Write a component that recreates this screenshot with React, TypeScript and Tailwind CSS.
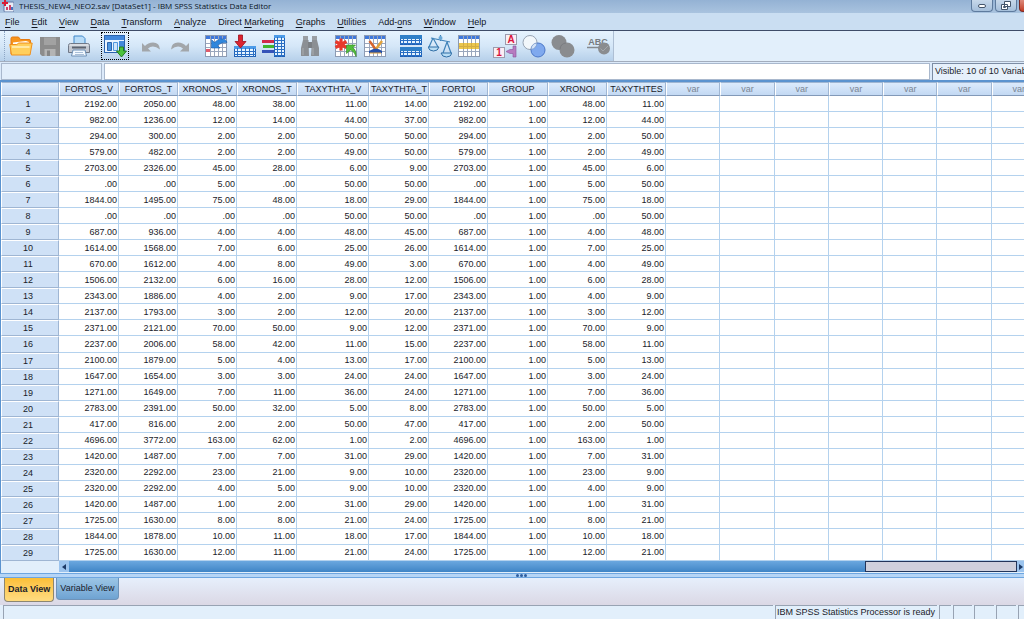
import type { ReactNode } from "react";

type Column = { name: string; width: string };

const columns: Column[] = [
  { name: "FORTOS_V", width: "w-[60px]" },
  { name: "FORTOS_T", width: "w-[59px]" },
  { name: "XRONOS_V", width: "w-[59px]" },
  { name: "XRONOS_T", width: "w-[60px]" },
  { name: "TAXYTHTA_V", width: "w-[72px]" },
  { name: "TAXYTHTA_T", width: "w-[60px]" },
  { name: "FORTOI", width: "w-[59px]" },
  { name: "GROUP", width: "w-[60px]" },
  { name: "XRONOI", width: "w-[59px]" },
  { name: "TAXYTHTES", width: "w-[59px]" },
];

const emptyColumns = [0, 1, 2, 3, 4, 5, 6];

/* FORTOS_V, FORTOS_T, XRONOS_V, XRONOS_T, TAXYTHTA_V, TAXYTHTA_T */
const measurements: number[][] = [
  [2192, 2050, 48, 38, 11, 14],
  [982, 1236, 12, 14, 44, 37],
  [294, 300, 2, 2, 50, 50],
  [579, 482, 2, 2, 49, 50],
  [2703, 2326, 45, 28, 6, 9],
  [0, 0, 5, 0, 50, 50],
  [1844, 1495, 75, 48, 18, 29],
  [0, 0, 0, 0, 50, 50],
  [687, 936, 4, 4, 48, 45],
  [1614, 1568, 7, 6, 25, 26],
  [670, 1612, 4, 8, 49, 3],
  [1506, 2132, 6, 16, 28, 12],
  [2343, 1886, 4, 2, 9, 17],
  [2137, 1793, 3, 2, 12, 20],
  [2371, 2121, 70, 50, 9, 12],
  [2237, 2006, 58, 42, 11, 15],
  [2100, 1879, 5, 4, 13, 17],
  [1647, 1654, 3, 3, 24, 24],
  [1271, 1649, 7, 11, 36, 24],
  [2783, 2391, 50, 32, 5, 8],
  [417, 816, 2, 2, 50, 47],
  [4696, 3772, 163, 62, 1, 2],
  [1420, 1487, 7, 7, 31, 29],
  [2320, 2292, 23, 21, 9, 10],
  [2320, 2292, 4, 5, 9, 10],
  [1420, 1487, 1, 2, 31, 29],
  [1725, 1630, 8, 8, 21, 24],
  [1844, 1878, 10, 11, 18, 17],
  [1725, 1630, 12, 11, 21, 24],
];

const rows = measurements.map((m) => [...m, m[0], 1, m[2], m[4]]);

const format = (value: number) => (value === 0 ? ".00" : value.toFixed(2));

const menus: [string, string, string][] = [
  ["", "F", "ile"],
  ["", "E", "dit"],
  ["", "V", "iew"],
  ["", "D", "ata"],
  ["", "T", "ransform"],
  ["", "A", "nalyze"],
  ["Direct ", "M", "arketing"],
  ["", "G", "raphs"],
  ["", "U", "tilities"],
  ["Add-", "o", "ns"],
  ["", "W", "indow"],
  ["", "H", "elp"],
];

function Icon({ children }: { children: ReactNode }) {
  return (
    <svg viewBox="0 0 24 24" className="size-6" fill="none" aria-hidden="true">
      {children}
    </svg>
  );
}

function Sheet() {
  return (
    <>
      <rect x="1.5" y="1.5" width="21" height="21" fill="#fff" stroke="#8d9bb3" />
      <path d="M2 2h20v3H2z" fill="#3f78dc" />
      <path d="M2 9.5h20M2 13.5h20M2 17.5h20M6.5 2v20M10.5 2v20M14.5 2v20M18.5 2v20" stroke="#9aa7bd" />
    </>
  );
}

function BlueGrid({ x, y, w, h }: { x: number; y: number; w: number; h: number }) {
  const vertical = [];
  const horizontal = [];
  for (let i = 4; i < w; i += 4) vertical.push(`M${x + i - 0.5} ${y + 2}v${h - 2}`);
  for (let i = 5; i < h; i += 3) horizontal.push(`M${x} ${y + i + 0.5}h${w}`);
  return (
    <>
      <rect x={x} y={y} width={w} height={h} fill="#1f5fb4" />
      <rect x={x + 1} y={y + 3} width={w - 2} height={h - 4} fill="#e6f4ff" />
      <rect x={x} y={y} width={w} height="3" fill="#4c9be8" />
      <path d={[...vertical, ...horizontal].join("")} stroke="#2a6fc4" />
    </>
  );
}

const icons: Record<string, ReactNode> = {
  "Open data document": (
    <Icon>
      <path d="M2 20V4.500q0-1.500 1.500-1.500h6l2 2.500H20q1.500 0 1.500 1.500v3z" fill="#f7941c" stroke="#e67a10" />
      <path d="M4 8.500 17 7l3 1v3H4z" fill="#fff" />
      <path d="M.8 10.500h7l2-1.500h13.400L21 21H2.500z" fill="#ffcf5c" stroke="#f0901c" />
      <path d="M3 13h17.500" stroke="#ffe9a5" strokeWidth="2" />
    </Icon>
  ),
  "Save this document": (
    <Icon>
      <path d="M2 3h20v19H4l-2-2z" fill="#8c8c8c" />
      <path d="M6 3.500h12V11H6z" fill="#a2a2a2" />
      <path d="M6.500 15h11v7h-11z" fill="#b4b4b4" />
      <path d="M9 16.500h3V22H9z" fill="#858585" />
    </Icon>
  ),
  Print: (
    <Icon>
      <path d="M7 10V2h8.500L18 4.500V10z" fill="#b8dcf8" stroke="#3f86c8" />
      <path d="M3.500 9.500h17q2 0 2 2v7H1.500v-7q0-2 2-2z" fill="#c3c8d1" stroke="#707988" />
      <path d="M2.500 11h19" stroke="#eef1f5" />
      <path d="M5 13.500h14" stroke="#5c6471" strokeWidth="2" />
      <path d="M6 16h12l1.500 6h-15z" fill="#f3f9ff" stroke="#6d8fb5" />
      <path d="M8 18.500h8M8 20.500h9" stroke="#a9bfd8" />
    </Icon>
  ),
  "Recall recently used dialogs": (
    <Icon>
      <rect x="1.500" y="1.500" width="20" height="17" fill="#e9f4ff" stroke="#2b63ad" />
      <path d="M2 2h19v4H2z" fill="#4389dc" />
      <path d="M4.500 8.500h4v8h-4z" fill="#4e97df" stroke="#2b63ad" />
      <path d="M10.500 8.500h4v8h-4z" fill="#cfe5fa" stroke="#4e97df" />
      <path d="M16 7h5v11h-5z" fill="#4389dc" />
      <path d="M16.500 13h4v4h3l-5 6-5-6h3z" fill="#4cc33b" stroke="#227c20" />
    </Icon>
  ),
  Undo: (
    <Icon>
      <path d="M3 9v8.500h9l-3-3q5-4.500 12 1Q20.500 8.500 14 8.500 9 8.500 6 12z" fill="#a2a6aa" />
    </Icon>
  ),
  Redo: (
    <Icon>
      <path d="M21 9v8.500h-9l3-3q-5-4.500-12 1Q3.500 8.500 10 8.500q5 0 8 3.500z" fill="#a2a6aa" />
    </Icon>
  ),
  "Go to case": (
    <Icon>
      <Sheet />
      <path d="M2 15h4v3H2z" fill="#e05a6a" />
      <path d="M7.500 5.500V14H16l-2.500-2.500Q17 8 23 8.500q-1-4-6-3.500-4 .5-6.500 3.500z" fill="#2f86dc" stroke="#1b5cab" strokeWidth=".6" />
    </Icon>
  ),
  "Go to variable": (
    <Icon>
      <BlueGrid x={1} y={12} w={22} h={11} />
      <path d="M5.500 1h4v6.500H13L7.500 14 2 7.500h3.500z" fill="#dc2430" stroke="#9c0f1c" strokeWidth=".8" />
    </Icon>
  ),
  Variables: (
    <Icon>
      <BlueGrid x={12} y={1} w={11} h={22} />
      <path d="M0 7.500h12" stroke="#d02a4a" strokeWidth="3" />
      <path d="M1 12.500h11" stroke="#3fb52e" strokeWidth="3" />
      <path d="M0 17.500h12" stroke="#3553b8" strokeWidth="3" />
    </Icon>
  ),
  Find: (
    <Icon>
      <path d="M5 2h5v5H5zM14 2h5v5h-5z" fill="#9b9fa4" />
      <path d="M5 6h5.500L11 22H3v-8zM14 6h5l2 8v8h-8z" fill="#8b8f94" />
      <path d="M10 8h4v6h-4z" fill="#7b7f84" />
      <path d="M5 14v7M15 14v7" stroke="#a9adb1" />
    </Icon>
  ),
  "Insert cases": (
    <Icon>
      <Sheet />
      <path d="M7 4.500v12M1.500 7.500l11 6M12.500 7.500l-11 6" stroke="#e8392c" strokeWidth="3.200" />
      <path d="M12.500 11h9L19 13.500q4 4 3 9-1.500-5-5.500-6.500l-4 3.500z" fill="#53bd3d" stroke="#2c8a22" strokeWidth=".6" />
    </Icon>
  ),
  "Insert variable": (
    <Icon>
      <Sheet />
      <path d="m6.500 7 6 8" stroke="#d8642c" strokeWidth="2.500" />
      <path d="m19 7-6 8" stroke="#e2a23a" strokeWidth="2.500" />
      <path d="M6 17q4-2.500 7-2.500T19 17v2H6z" fill="#244fa8" />
      <path d="M7 19h11" stroke="#e2a23a" />
    </Icon>
  ),
  "Split file": (
    <Icon>
      <BlueGrid x={1} y={1} w={22} h={10} />
      <BlueGrid x={1} y={13} w={22} h={10} />
      <path d="M1 1h22v4H1zM1 13h22v4H1z" fill="#2f7fc8" />
    </Icon>
  ),
  "Weight cases": (
    <Icon>
      <path d="m3 4 19 4M12.500 1v6M5 4 1 13M5 4l5 9M19 8l-4 11M19 8l4 11" stroke="#3f82b8" strokeWidth="1.200" />
      <path d="M0 13h11q-1 4-5.500 4T0 13zM13 19h11q-1 4-5.500 4T13 19z" fill="#b9ddf4" stroke="#2f6ea6" />
      <circle cx="12.500" cy="4" r="2" fill="#6ba9d8" />
    </Icon>
  ),
  "Select cases": (
    <Icon>
      <Sheet />
      <path d="M2 9h20v6H2z" fill="#ebc64e" />
      <path d="M6.500 9v6M10.500 9v6M14.500 9v6M18.500 9v6M2 12.500h20" stroke="#d3ad45" />
    </Icon>
  ),
  "Value labels": (
    <svg viewBox="0 0 24 24" className="size-6" fill="none" aria-hidden="true">
      <rect x="12.500" y=".5" width="11" height="10" fill="#fbeef4" stroke="#9c9cae" />
      <rect x=".5" y="13.500" width="11" height="10" fill="#fbeef4" stroke="#9c9cae" />
      <path d="M23 12v11h-3v-3.500h-3l-4-2 4-2h3V12z" fill="#b77bc0" stroke="#8c539c" strokeWidth=".6" />
      <text x="18" y="9" textAnchor="middle" fill="#d8143c" className="font-['Liberation_Sans'] text-[10px] font-bold">A</text>
      <text x="6" y="22" textAnchor="middle" fill="#d8143c" className="font-['Liberation_Sans'] text-[10px] font-bold">1</text>
    </svg>
  ),
  "Use variable sets": (
    <Icon>
      <circle cx="8" cy="8.500" r="7" fill="#f2f7fb" stroke="#97a3b3" />
      <circle cx="16" cy="16" r="7" fill="#7fa9ee" stroke="#4c78c8" />
      <path d="M9 15.400Q9.500 9.500 15 9q-.5 5.500-6 6.400z" fill="#d3e3f8" stroke="#6f8fc0" strokeWidth=".6" />
    </Icon>
  ),
  "Show all variables": (
    <Icon>
      <circle cx="8" cy="8.500" r="7.500" fill="#8a8c8f" />
      <circle cx="16" cy="16" r="7.500" fill="#8a8c8f" />
      <path d="M9 15.400Q9.500 9.500 15 9" stroke="#7a7c80" />
    </Icon>
  ),
  "Spell check": (
    <svg viewBox="0 0 24 24" className="size-6" fill="none" aria-hidden="true">
      <text x="11" y="11" textAnchor="middle" fill="#777b80" className="font-['Liberation_Sans'] text-[9px] font-bold">ABC</text>
      <path d="M0 13.500h13" stroke="#85898e" strokeWidth="1.500" />
      <circle cx="17" cy="14.500" r="6" fill="#8a8c8f" />
      <path d="m13.500 14.500 2.500 2.500 5-5" stroke="#a4a7ab" />
    </svg>
  ),
};

const toolbarGroups: string[][] = [
  ["Open data document", "Save this document", "Print"],
  ["Recall recently used dialogs"],
  ["Undo", "Redo"],
  ["Go to case", "Go to variable", "Variables"],
  ["Find"],
  ["Insert cases", "Insert variable"],
  ["Split file", "Weight cases", "Select cases"],
  ["Value labels", "Use variable sets", "Show all variables"],
  ["Spell check"],
];

function TitleBar() {
  return (
    <header className="flex h-[13px] shrink-0 items-start overflow-hidden bg-linear-to-b from-[#94b2d4] to-[#a9c3df] pl-[2px]">
      <svg viewBox="0 0 12 12" className="size-3 shrink-0" aria-hidden="true">
        <rect x="2" y="2" width="10" height="10" rx="1" fill="#e8edf6" stroke="#5f78a8" />
        <path d="M3 0v6M0 3h6" stroke="#d81c34" strokeWidth="2" />
        <path d="M4 10V7h2v3zM7 10V5h2v5z" fill="#d04468" />
        <path d="M9 10V7h2v3z" fill="#4670c0" />
      </svg>
      <h1 className="ml-[5px] grow truncate font-['Open_Sans',sans-serif] text-[8px] leading-[12px] text-[#0c1626]">
        THESIS_NEW4_NEO2.sav [DataSet1] - IBM SPSS Statistics Data Editor
      </h1>
      <div className="-mr-[17px] flex shrink-0 gap-[2px]">
        <button aria-label="Minimize" className="flex h-3 w-[22px] items-center justify-center rounded-b border border-t-0 border-[#5e7b9e] bg-linear-to-b from-[#c7d8ea] to-[#a5bfdb]">
          <span className="h-1 w-2 rounded-xs border border-[#44556b] bg-white" />
        </button>
        <button aria-label="Restore" className="flex h-3 w-[22px] items-center justify-center rounded-b border border-t-0 border-[#5e7b9e] bg-linear-to-b from-[#c7d8ea] to-[#a5bfdb]">
          <svg viewBox="0 0 10 9" className="h-[9px] w-[10px]" fill="#fff" stroke="#44556b" aria-hidden="true">
            <path d="M3.500.5h6v5h-6zM.5 3.500h6v5h-6z" />
            <path d="M2.500 5.500h2v1h-2z" />
          </svg>
        </button>
        <button aria-label="Close" className="h-3 w-[22px] rounded-b border border-t-0 border-[#7a2b25] bg-linear-to-b from-[#dc8a7c] to-[#c03a24]" />
      </div>
    </header>
  );
}

function MenuBar() {
  return (
    <nav className="flex h-[18px] shrink-0 items-center gap-3 border-b border-[#3e4c68] bg-[#cadef2] pl-[5px] text-[#10131c]">
      {menus.map(([before, key, after]) => (
        <button key={before + key + after} className="whitespace-pre leading-[14px]">
          {before}
          <span className="underline underline-offset-2">{key}</span>
          {after}
        </button>
      ))}
    </nav>
  );
}

function Toolbar() {
  return (
    <div className="flex h-[31px] shrink-0 border-b border-[#a3adbd] bg-[#e2effb]">
      <div role="toolbar" className="flex items-center gap-2 border-r border-[#aebfd4] bg-linear-to-b from-[#e6f3fe] via-[#d5e7f8] to-[#b6d0ea] pl-1">
        <span className="-mr-2 h-full border-l border-dotted border-[#8ea6c4] pl-[2px]" />
        {toolbarGroups.map((group) => (
          <div key={group[0]} className="flex gap-px">
            {group.map((name) => (
              <button
                key={name}
                title={name}
                aria-label={name}
                className={`flex h-7 w-7 items-center justify-center ${
                  group[0] === "Recall recently used dialogs" ? "border border-dotted border-black" : ""
                }`}
              >
                {icons[name]}
              </button>
            ))}
          </div>
        ))}
      </div>
    </div>
  );
}

function CellEditor() {
  return (
    <div className="flex h-[18px] shrink-0 gap-[2px] bg-[#dceafa] pl-px pt-px">
      <div className="w-[101px] border border-[#a9b8cd] bg-[#e2eefb]" />
      <input aria-label="Cell value" className="min-w-0 grow border border-[#a9b8cd] bg-white px-1 outline-none" />
      <div className="w-[92px] shrink-0 overflow-hidden whitespace-nowrap border-l border-t border-[#7c8ca4] bg-[#e6f0fb] pl-[2px] leading-[15px]">
        Visible: 10 of 10 Variables
      </div>
    </div>
  );
}

const headCell =
  "overflow-hidden border border-[#9fb6d3] border-b-[#8299b8] border-l-white bg-linear-to-b from-[#dcebfc] to-[#c3d9f3] p-0 text-center font-normal whitespace-nowrap";

function DataGrid() {
  return (
    <main className="min-h-0 grow overflow-hidden border-l border-t-2 border-[#5b93cf] bg-white">
      <table className="h-full w-[1045px] table-fixed border-separate border-spacing-0 leading-[12px]">
        <colgroup>
          <col className="w-[58px]" />
          {columns.map((c) => (
            <col key={c.name} className={c.width} />
          ))}
          {emptyColumns.map((i) => (
            <col key={i} />
          ))}
        </colgroup>
        <thead>
          <tr>
            <td className={headCell} />
            {columns.map((c) => (
              <th key={c.name} scope="col" className={headCell}>
                {c.name}
              </th>
            ))}
            {emptyColumns.map((i) => (
              <th key={i} scope="col" className={`${headCell} text-[#7b8694]`}>
                var
              </th>
            ))}
          </tr>
        </thead>
        <tbody>
          {rows.map((row, r) => (
            <tr key={r}>
              <th scope="row" className="border border-[#9fb6d3] border-t-white border-l-white bg-[#cfe1f6] p-0 pr-1 text-center font-normal">
                {r + 1}
              </th>
              {row.map((value, c) => (
                <td key={c} className="border-r border-b border-[#b4d2ee] p-0 pr-px text-right">
                  {format(value)}
                </td>
              ))}
              {emptyColumns.map((i) => (
                <td key={i} className="border-r border-b border-[#b4d2ee] p-0" />
              ))}
            </tr>
          ))}
        </tbody>
      </table>
    </main>
  );
}

function HorizontalScroll() {
  return (
    <div className="flex h-3 shrink-0 border-l border-[#5b93cf] bg-[#e2effb] pb-px">
      <div className="flex grow pl-[58px]">
        <button aria-label="Scroll left" className="flex w-[10px] items-center justify-center bg-[#9cc4ee]">
          <svg viewBox="0 0 4 6" className="h-[6px] w-1" aria-hidden="true"><path d="M4 0v6L0 3z" fill="#1c3a66" /></svg>
        </button>
        <div className="flex grow justify-end bg-linear-to-b from-[#6aa7df] to-[#3f85c6]">
          <div className="w-[16%] border border-[#22355a] bg-[#cfd0dc]" />
        </div>
        <button aria-label="Scroll right" className="flex w-[7px] items-center justify-center bg-[#9cc4ee]">
          <svg viewBox="0 0 4 6" className="h-[6px] w-1" aria-hidden="true"><path d="M0 0v6l4-3z" fill="#1c3a66" /></svg>
        </button>
      </div>
    </div>
  );
}

function Splitter() {
  return (
    <div className="flex h-[5px] shrink-0 items-center justify-center gap-px border-y border-[#6ea6e0] bg-[#b5d5f6] pl-[18px]">
      <span className="size-[3px] rounded-full bg-[#2f5fa0]" />
      <span className="size-[3px] rounded-full bg-[#2f5fa0]" />
      <span className="size-[3px] rounded-full bg-[#2f5fa0]" />
    </div>
  );
}

function ViewTabs() {
  return (
    <div role="tablist" className="flex h-[27px] shrink-0 items-start gap-[2px] bg-linear-to-b from-[#e6effc] to-[#dbd8e5] pl-1">
      <button role="tab" aria-selected="true" className="h-6 rounded-b-sm border border-t-0 border-[#8c8672] bg-linear-to-b from-[#fbbf35] to-[#ffdc80] px-[3px] font-bold">
        Data View
      </button>
      <button role="tab" aria-selected="false" className="h-[22px] rounded-b-sm border border-t-0 border-[#6f93b8] bg-linear-to-b from-[#9cc6e6] to-[#6fa3d2] px-[3px]">
        Variable View
      </button>
    </div>
  );
}

const statusCell = "border-l border-t border-[#98a3b3]";

function StatusBar() {
  return (
    <footer className="flex h-[14px] shrink-0 gap-[2px] bg-[#e2effb] pl-[3px] leading-[13px]">
      <div className={`${statusCell} grow`} />
      <div className={`${statusCell} w-[162px] whitespace-nowrap pl-px`}>IBM SPSS Statistics Processor is ready</div>
      <div className={`${statusCell} w-3`} />
      <div className={`${statusCell} w-[19px]`} />
      <div className={`${statusCell} w-5`} />
      <div className={`${statusCell} w-5`} />
      <div className={`${statusCell} w-[6px]`} />
    </footer>
  );
}

export default function App() {
  return (
    <div className="flex h-screen flex-col overflow-hidden bg-[#e2effb] font-['Liberation_Sans',Arial,sans-serif] text-[9px] text-[#1a1c2a]">
      <TitleBar />
      <MenuBar />
      <Toolbar />
      <CellEditor />
      <DataGrid />
      <HorizontalScroll />
      <Splitter />
      <ViewTabs />
      <StatusBar />
    </div>
  );
}
